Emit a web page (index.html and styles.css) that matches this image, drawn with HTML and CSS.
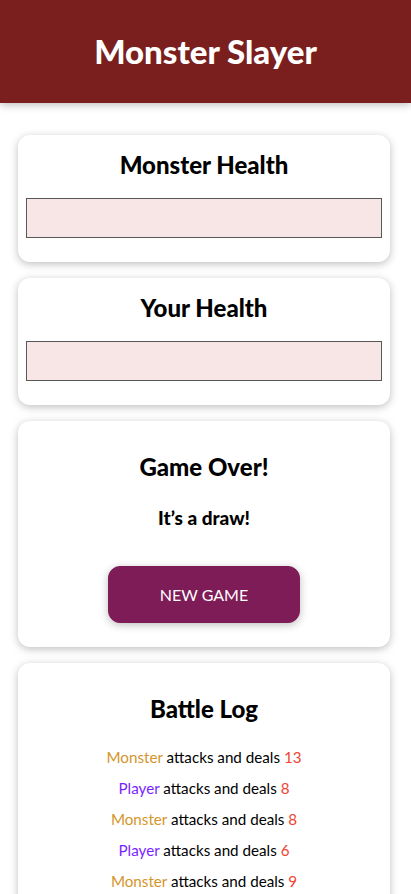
FILE: index.html
```
<!DOCTYPE html>
<html lang="en">
<head>
<meta charset="utf-8">
<title>Monster Slayer</title>
<link rel="stylesheet" href="styles.css">
</head>
<body>
<header class="header">
  <h1 class="title">Monster Slayer</h1>
</header>
<div class="game">
  <section class="container health">
    <h2 class="heading heading--tight">Monster Health</h2>
    <div class="healthbar"></div>
  </section>
  <section class="container health">
    <h2 class="heading heading--tight">Your Health</h2>
    <div class="healthbar"></div>
  </section>
  <section class="container">
    <h2 class="heading">Game Over!</h2>
    <h3 class="result">It’s a draw!</h3>
    <button class="btn">NEW GAME</button>
  </section>
  <section class="container log">
    <h2 class="heading">Battle Log</h2>
    <ul class="log-list">
      <li><span class="log--monster">Monster</span> attacks and deals <span class="log--damage">13</span></li>
      <li><span class="log--player">Player</span> attacks and deals <span class="log--damage">8</span></li>
      <li><span class="log--monster">Monster</span> attacks and deals <span class="log--damage">8</span></li>
      <li><span class="log--player">Player</span> attacks and deals <span class="log--damage">6</span></li>
      <li><span class="log--monster">Monster</span> attacks and deals <span class="log--damage">9</span></li>
    </ul>
  </section>
</div>
</body>
</html>
```

FILE: styles.css
```
* { box-sizing: border-box; }

html, body {
  margin: 0;
  padding: 0;
}

body {
  font-family: "Lato", "Noto Sans", sans-serif;
  font-size: 16px;
  color: #000;
  background: #fff;
}

.header {
  height: 103px;
  background-color: #7a1e1e;
  color: #fff;
  display: flex;
  align-items: center;
  justify-content: center;
  box-shadow: 0 2px 8px rgba(0, 0, 0, 0.26);
  margin-bottom: 32px;
}

.title {
  margin: 0;
  font-size: 33px;
  line-height: 40px;
  font-weight: 900;
  padding-bottom: 2px;
}

.game {
  padding: 0 21px 0 18px;
}

.container {
  text-align: center;
  padding: 8px;
  margin: 0 0 16px;
  box-shadow: 0 2px 8px rgba(0, 0, 0, 0.26);
  border-radius: 12px;
  background: #fff;
  display: flow-root;
}

.heading {
  font-size: 24px;
  line-height: 35px;
  font-weight: 900;
  margin: 20px 0;
}

.heading--tight {
  margin: 4px 0 0;
}

.healthbar {
  height: 40px;
  border: 1px solid #575757;
  background: #f8e6e6;
  margin: 16px 0;
}

.result {
  font-size: 19px;
  line-height: 27px;
  font-weight: 900;
  margin: 19px 0;
}

.btn {
  font: inherit;
  font-size: 16px;
  line-height: 23px;
  border: 1px solid #7d1c57;
  background-color: #7d1c57;
  color: #fff;
  padding: 16px 0;
  border-radius: 12px;
  margin: 16px;
  width: 192px;
  box-shadow: 0 2px 8px rgba(0, 0, 0, 0.26);
  vertical-align: top;
}

.log-list {
  list-style: none;
  margin: 0;
  padding: 0;
}

.log-list li {
  margin: 8px 0;
  line-height: 23px;
  font-size: 15.2px;
}

.log--monster { color: #d4962a; }
.log--player { color: #7b1fff; }
.log--damage { color: #ee4433; }
```
